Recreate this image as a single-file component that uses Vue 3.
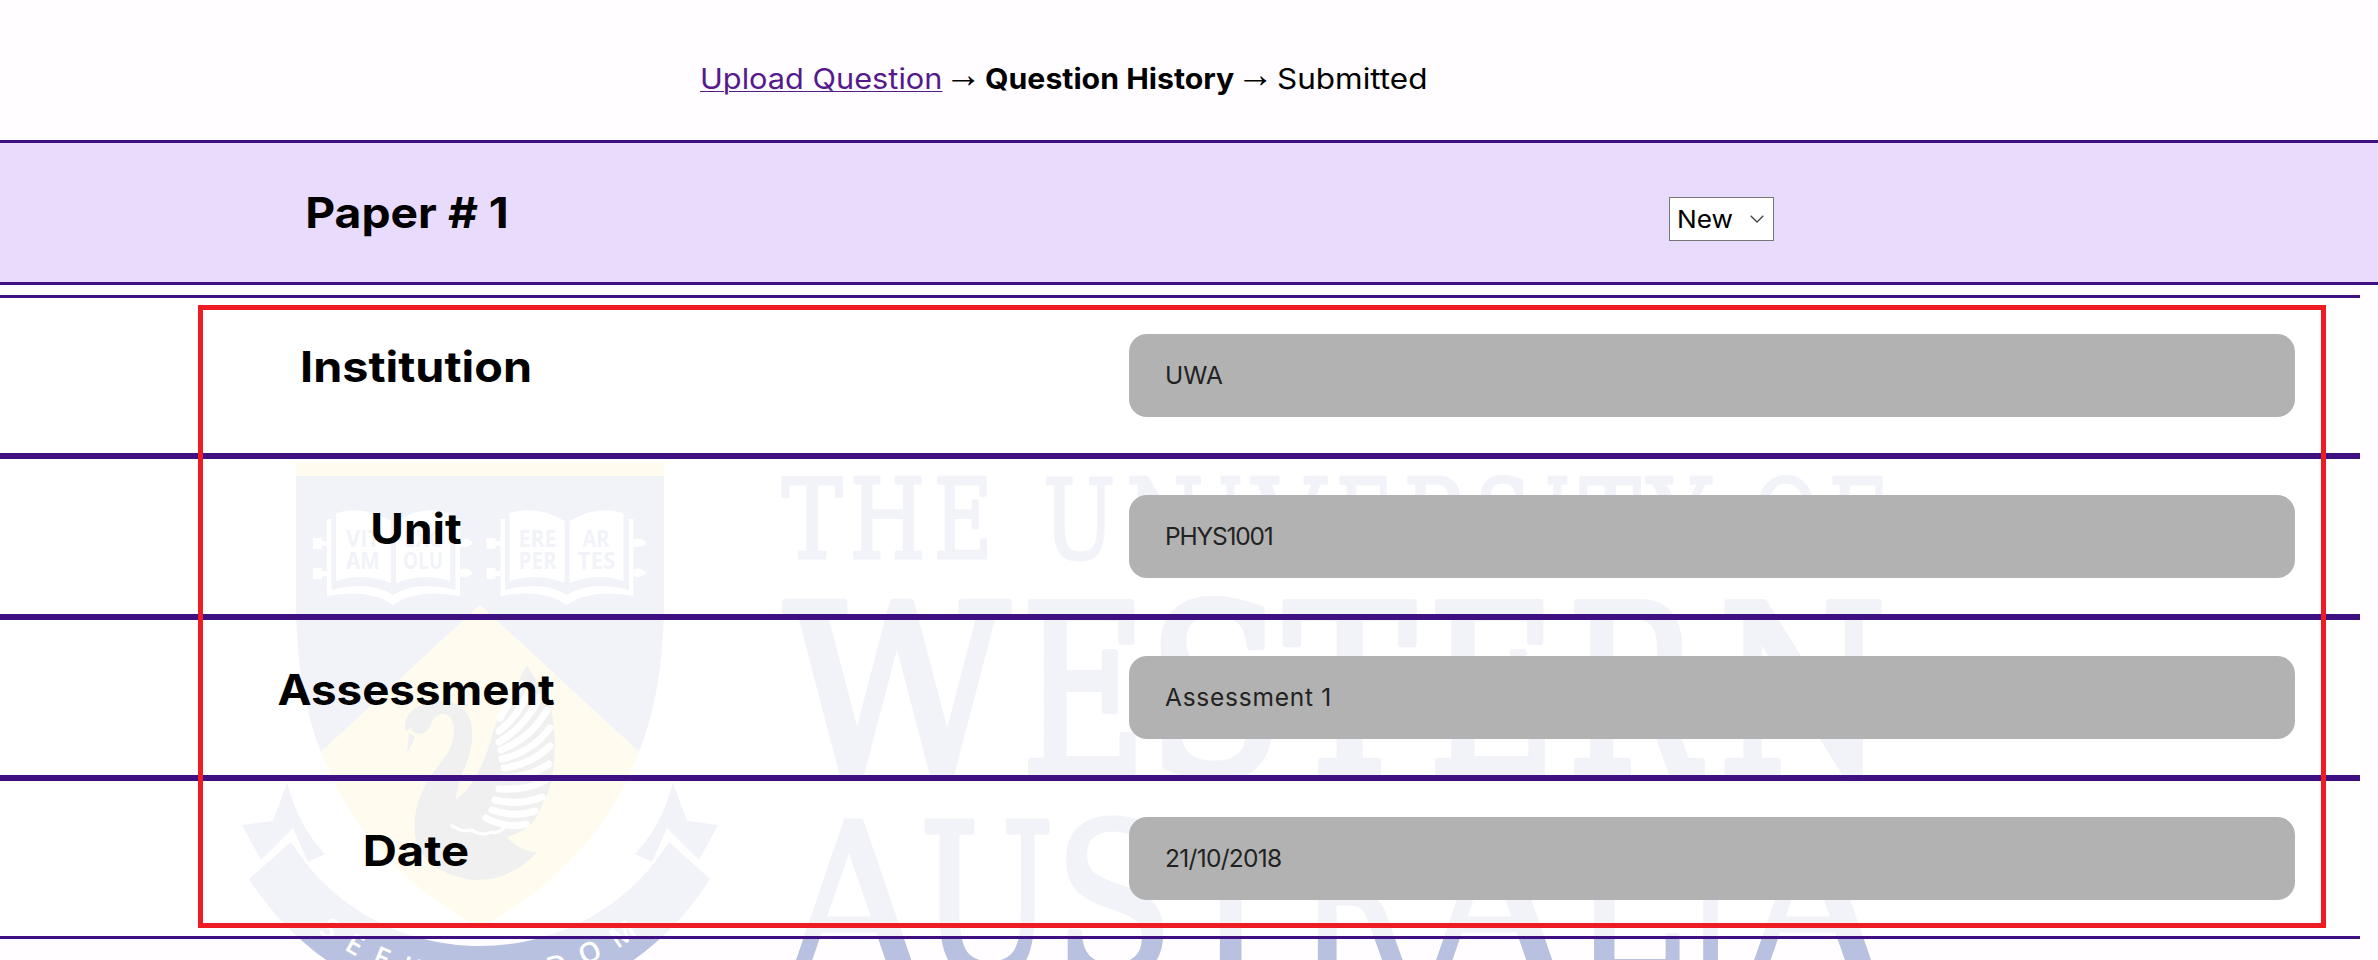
<script setup>
const rows = [
  { key: 'institution', label: 'Institution', value: 'UWA' },
  { key: 'unit', label: 'Unit', value: 'PHYS1001' },
  { key: 'assessment', label: 'Assessment', value: 'Assessment 1' },
  { key: 'date', label: 'Date', value: '21/10/2018' },
]
const books = [
  { x: 0, words: [['VIT', 346, 547, 34], ['AM', 346, 569, 34], ['EXC', 404, 547, 38], ['OLU', 403, 569, 40]] },
  { x: 173.5, words: [['ERE', 345, 547, 38], ['PER', 345, 569, 38], ['AR', 409, 547, 27], ['TES', 404, 569, 38]] },
]

// Advance, left ink edge and right ink edge of each capital, in em.
const metrics = {
  W: [1.028, 0.01, 1.02], E: [0.73, 0.055, 0.68], S: [0.685, 0.08, 0.62], T: [0.667, 0.02, 0.645],
  R: [0.753, 0.055, 0.76], N: [0.875, 0.05, 0.85], A: [0.722, 0, 0.727], U: [0.843, 0.04, 0.81],
  L: [0.664, 0.055, 0.64], I: [0.395, 0.055, 0.34], H: [0.872, 0.055, 0.815], O: [0.82, 0.055, 0.765],
  F: [0.694, 0.055, 0.665], V: [0.722, 0, 0.727], Y: [0.66, 0, 0.67],
}
const place = (line, letters, y, stroke) =>
  letters.map(([ch, from, to]) => {
    const [adv, l, r] = metrics[ch]
    const em = (to - from - stroke) / (r - l)
    return { line, ch, y, x: from + stroke / 2 - l * em, w: adv * em }
  })
const wordmark = [
  ...place('line-one', [
    ['T', 782, 842], ['H', 853, 922], ['E', 937, 990],
    ['U', 1045, 1114], ['N', 1129, 1203], ['I', 1220, 1241], ['V', 1251, 1327], ['E', 1339, 1390],
    ['R', 1407, 1470], ['S', 1480, 1527], ['I', 1547, 1568], ['T', 1580, 1640], ['Y', 1646, 1713],
    ['O', 1755, 1817], ['F', 1832, 1884],
  ], 558, 3),
  ...place('line-two', [
    ['W', 783, 1011], ['E', 1027, 1142], ['S', 1159, 1274], ['T', 1284, 1415],
    ['E', 1434, 1551], ['R', 1573, 1703], ['N', 1724, 1886],
  ], 774, 8),
  ...place('line-three', [
    ['A', 784, 925], ['U', 923, 1052], ['S', 1065, 1165], ['T', 1173, 1288], ['R', 1303, 1415],
    ['A', 1424, 1566], ['L', 1578, 1680], ['I', 1691, 1730], ['A', 1742, 1885],
  ], 974, 5),
]
</script>

<template>
  <div class="page">
    <svg class="crest" viewBox="0 0 2378 960" aria-hidden="true">
      <rect x="296" y="463" width="368" height="14" class="gold" />
      <path class="blue" d="M296 476H664V600C664 665 654 715 639 752L480 605L321 752C306 715 296 665 296 600Z" />
      <path class="gold" d="M480 605L639 752C620 800 585 870 480 928C375 870 340 800 321 752Z" />

      <g v-for="b in books" :key="b.x" :transform="`translate(${b.x} 0)`">
        <path class="white" d="M336 513Q364 505 391 521V583Q364 572 336 581Z" />
        <path class="white" d="M396 521Q423 505 450 513V581Q423 572 396 583Z" />
        <path class="white" d="M327 519H331.500V590Q370 580 393 595Q417 580 455.500 590V519H460V596Q417 588 393 605Q370 588 327 596Z" />
        <path class="white" d="M313 538H322V541H327V546H322V549H313ZM313 568H322V571H327V576H322V579H313ZM460 540Q466 536 473 543Q466 549 460 546ZM460 570Q466 566 473 573Q466 579 460 576Z" />
        <text v-for="w in b.words" :key="w[0]" class="motto" :x="w[1]" :y="w[2]" :textLength="w[3]" lengthAdjust="spacingAndGlyphs">{{ w[0] }}</text>
      </g>

      <path class="grey" d="M405 727C405 715 413 706 429 703C450 696 472 706 472 731C474 758 458 775 456 799C472 790 485 760 491 740C496 712 517 700 519 680L527 665L536 680C551 692 553 712 555 743C555 762 552 790 544 800C538 820 528 831 507 837C515 845 524 852 537 852C520 871 500 880 477 880C442 878 416 858 415 833C412 800 430 775 445 757C457 740 457 716 444 714C432 714 433 724 427 731C419 737 411 733 411 727Q409 731 405 730Z" />
      <path class="grey" d="M407 753L409 733L415 737Q412 745 407 753Z" />
      <g class="feathers">
        <path d="M500 718Q510 700 522 684" />
        <path d="M499 731Q517 718 529 691" />
        <path d="M499 742Q525 727 540 697" />
        <path d="M501 750Q531 738 547 710" />
        <path d="M502 759Q532 752 550 728" />
        <path d="M504 768Q532 764 550 746" />
        <path d="M503 778Q530 777 549 764" />
        <path d="M499 789Q527 791 546 780" />
        <path d="M495 800Q520 806 542 797" />
        <path d="M492 810Q515 818 535 811" />
        <path d="M486 818Q507 829 526 824" />
      </g>
      <path class="wing-edge" d="M451 825Q462 833 472 830Q482 837 491 832Q498 835 507 825" />

      <path id="tail" class="blue" d="M287 783L273 821L242 825L261 860L293 828L308 862L325 854C308 836 296 815 287 783Z" />
      <use href="#tail" transform="matrix(-1 0 0 1 960 0)" />
      <path class="blue" d="M249 879L291 842C330 905 400 946 480 946C560 946 630 905 669 842L710 879C660 958 578 1008 480 1008C382 1008 300 958 249 879Z" />
      <path id="ribbon" fill="none" d="M318 932A266 266 0 0 0 642 932" />
      <text class="ribbon-text"><textPath href="#ribbon" textLength="344">SEEK WISDOM</textPath></text>

      <g class="wordmark">
        <text v-for="(g, i) in wordmark" :key="i" :class="g.line" :x="g.x" :y="g.y" :textLength="g.w" lengthAdjust="spacingAndGlyphs">{{ g.ch }}</text>
      </g>
    </svg>

    <nav class="trail">
      <span class="step"><a class="upload" href="#">Upload Question</a></span>
      <span class="arrow">→</span>
      <span class="step wide"><strong class="history">Question History</strong></span>
      <span class="arrow">→</span>
      <span class="step"><span class="submitted">Submitted</span></span>
    </nav>

    <header class="paper">
      <h2 class="label paper-title">Paper # 1</h2>
      <div class="select">
        <span class="choice">New</span>
        <svg class="chevron" viewBox="0 0 14 8"><path d="M.7.7L7 7L13.300.7" /></svg>
      </div>
    </header>

    <main class="details">
      <section v-for="r in rows" :key="r.key" class="row">
        <h2 class="label" :class="r.key">{{ r.label }}</h2>
        <div class="field"><span :class="'v-' + r.key">{{ r.value }}</span></div>
      </section>
    </main>

    <div class="highlight"></div>
  </div>
</template>

<style>
body { margin: 0; background: #fffdff; }
</style>

<style scoped>
.page {
  position: relative;
  width: 2378px;
  height: 960px;
  overflow: hidden;
  background: #fffdff;
  color: #000;
  font-family: Inter, "Liberation Sans", sans-serif;
}
.crest { position: absolute; inset: 0; width: 2378px; height: 960px; }
.blue, #tail { fill: #b8c1df; }
.gold { fill: #ffedb0; }
.grey { fill: #b6b6b6; }
.white { fill: #fff; }
.feathers path { fill: none; stroke: #fff; stroke-width: 7; stroke-linecap: round; }
.wing-edge { fill: none; stroke: #fff; stroke-width: 3; }
.motto { font: 700 24px "Open Sans", sans-serif; fill: #b8c1df; }
.ribbon-text { font: 600 28px "Open Sans", sans-serif; fill: #fff; }
.wordmark { font-family: "DejaVu Serif", serif; fill: #b8c1df; stroke: #b8c1df; stroke-linejoin: round; }
.line-one { font-size: 110px; stroke-width: 3; }
.line-two { font-size: 234px; stroke-width: 8; }
.line-three { font-size: 210px; stroke-width: 5; }

.trail {
  position: relative;
  box-sizing: border-box;
  height: 140px;
  padding: 59px 0 0 700px;
  display: flex;
  gap: 8px;
  font-size: 28.500px;
  line-height: 40px;
  white-space: nowrap;
}
.step { width: 241px; }
.wide { width: 248px; }
.upload, .history, .submitted { display: inline-block; transform-origin: 0 50%; }
.upload {
  transform: scaleX(1.078);
  color: #551a8b;
  text-decoration: underline;
  text-decoration-thickness: 1px;
  text-underline-offset: 2px;
}
.history { font-weight: 700; transform: scaleX(1.062); }
.submitted { transform: scaleX(1.105); }
.arrow {
  width: 28px;
  margin-top: -4px;
  display: flex;
  justify-content: center;
  font-family: "Liberation Serif", serif;
  font-size: 37px;
}

.paper {
  position: relative;
  box-sizing: border-box;
  height: 145px;
  display: flex;
  background: #e8dbfc;
  border-top: 3px solid #3e1082;
  border-bottom: 3px solid #3e1082;
}
.label {
  flex: none;
  width: 832px;
  margin: 0;
  text-align: center;
  font-size: 42.500px;
  font-weight: 700;
  line-height: 139px;
}
.institution { line-height: 137px; transform: scaleX(1.1); }
.unit { transform: scaleX(1.08); }
.assessment { transform: scaleX(1.075); }
.date { transform: scaleX(1.112); }
.paper-title { width: 814px; transform: scaleX(1.088); }
.select {
  box-sizing: border-box;
  width: 105px;
  height: 44px;
  margin: 54px 0 0 855px;
  padding: 0 9px 0 7px;
  display: flex;
  justify-content: space-between;
  align-items: center;
  background: #fff;
  border: 1px solid #767676;
  font-size: 24.500px;
  line-height: 42px;
}
.choice { transform: scaleX(1.07); transform-origin: 0 50%; }
.chevron { width: 14px; height: 8px; }
.chevron path { fill: none; stroke: #444; stroke-width: 1.300; }

.details {
  position: relative;
  width: 2360px;
  margin-top: 10px;
  background: rgba(255, 255, 255, .8);
  border-top: 3px solid #3e1082;
  border-bottom: 3px solid #3e1082;
}
.row { display: flex; height: 155px; }
.row + .row { border-top: 6px solid #3e1082; }
.field {
  box-sizing: border-box;
  width: 1166px;
  height: 83px;
  margin: 36px 65px 0 auto;
  padding-left: 36px;
  border-radius: 18px;
  background: #b2b2b2;
  color: #222;
  font-size: 24.500px;
  line-height: 83px;
}
.v-unit { letter-spacing: -1.200px; }
.v-assessment { letter-spacing: .75px; }
.v-date { letter-spacing: -.7px; }
.highlight {
  position: absolute;
  left: 198px;
  top: 305px;
  box-sizing: border-box;
  width: 2128px;
  height: 623px;
  border: 5px solid #ef1c24;
}
</style>
